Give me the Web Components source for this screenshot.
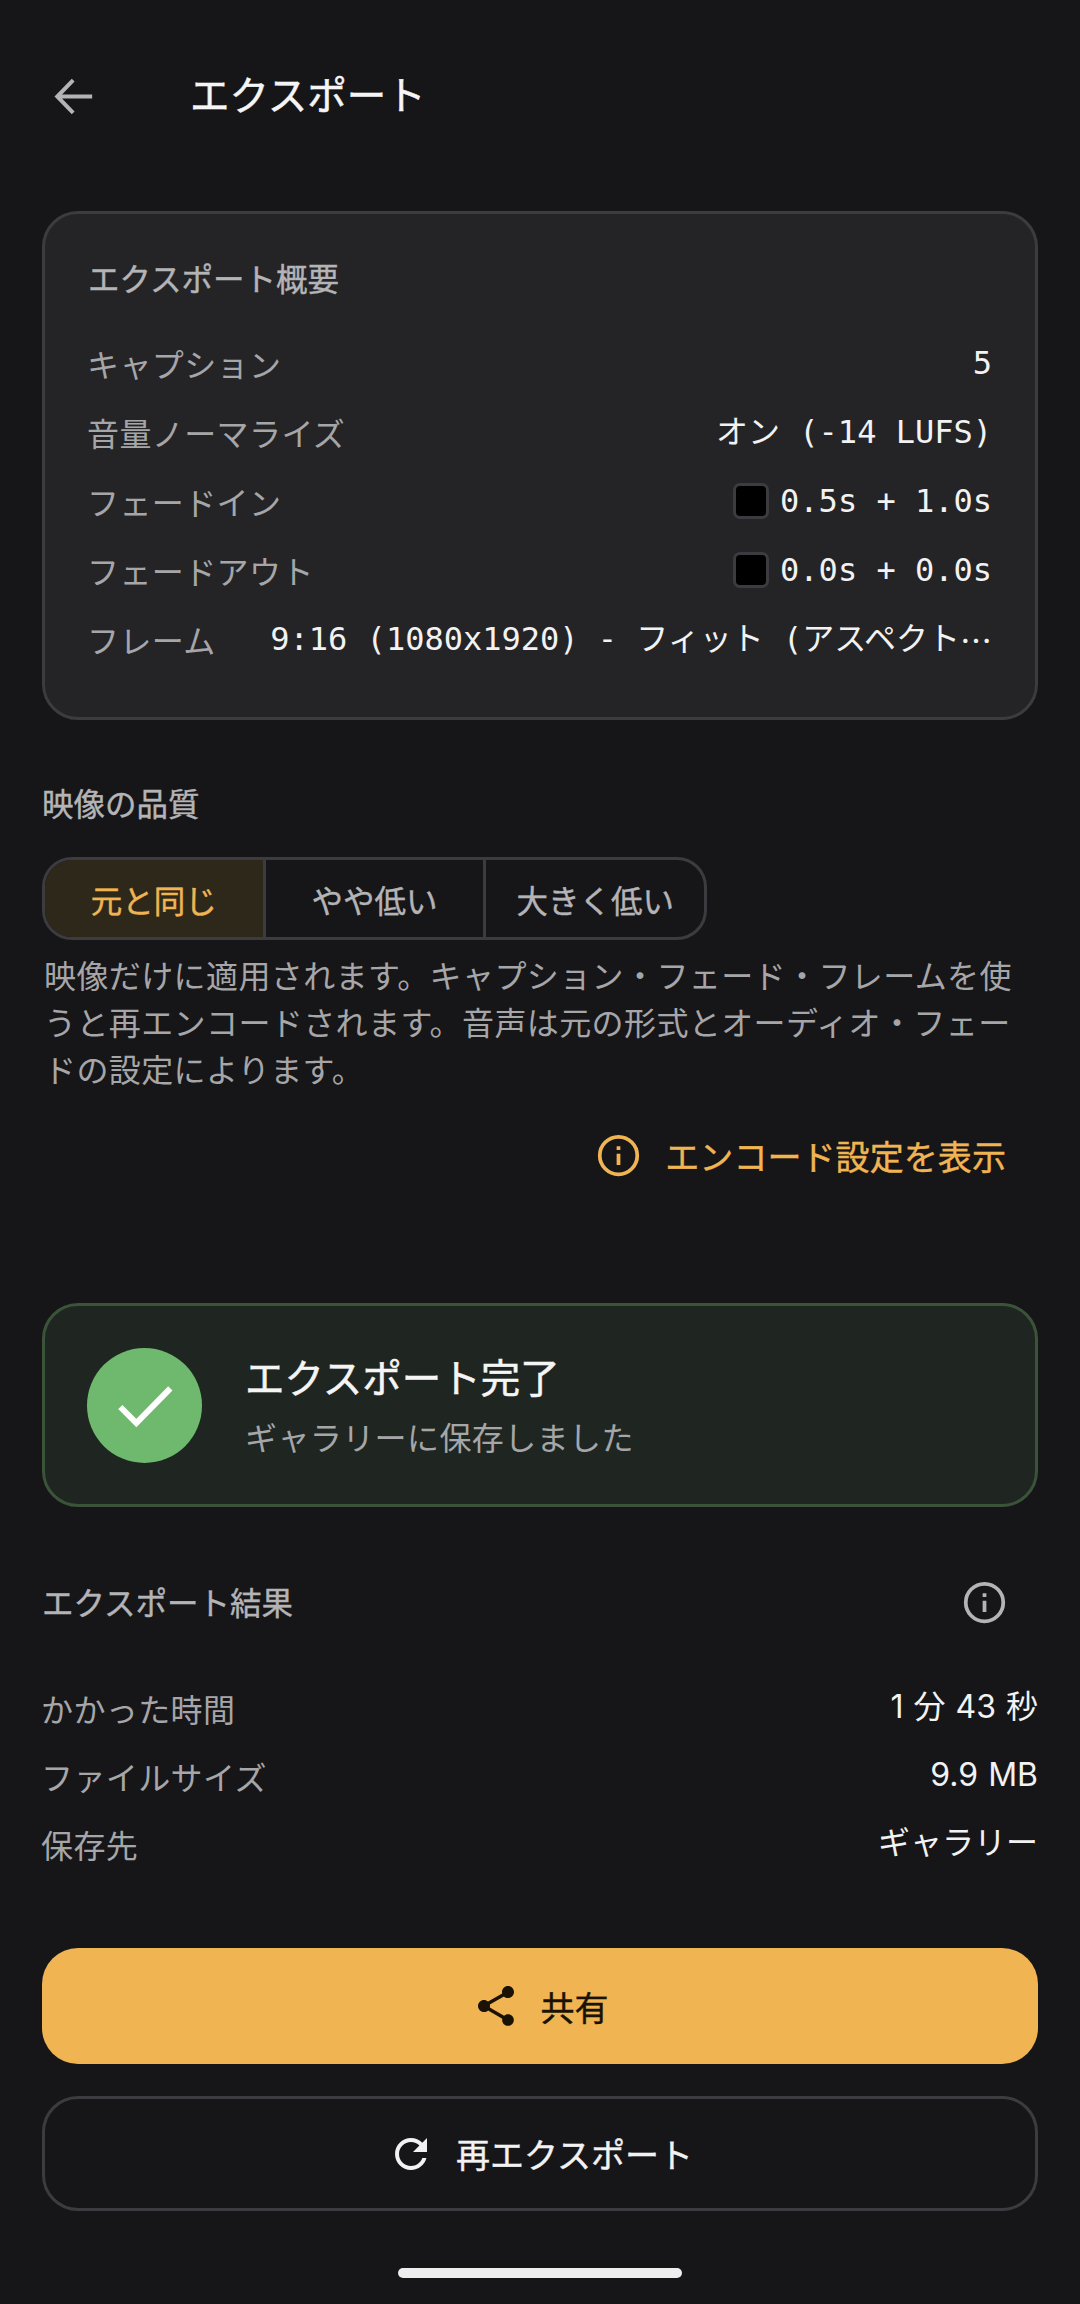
<!DOCTYPE html>
<html lang="ja">
<head>
<meta charset="utf-8">
<title>エクスポート</title>
<style>
  html, body { margin: 0; padding: 0; background: #161618; }
  body {
    font-family: "Noto Sans CJK JP", "Noto Sans", sans-serif;
    color: #f2f2f3;
    width: 1080px;
    height: 2304px;
    overflow: hidden;
  }
  .cjk { font-family: "Noto Sans CJK JP", sans-serif; }
</style>
</head>
<body>
<export-screen>
  <app-bar>エクスポート</app-bar>

  <summary-card>
    <section-title slot="title">エクスポート概要</section-title>
    <info-row label="キャプション" mono>5</info-row>
    <info-row label="音量ノーマライズ" mono>オン (-14 LUFS)</info-row>
    <info-row label="フェードイン" mono><color-swatch></color-swatch>0.5s + 1.0s</info-row>
    <info-row label="フェードアウト" mono><color-swatch></color-swatch>0.0s + 0.0s</info-row>
    <info-row label="フレーム" mono>9:16 (1080x1920) - フィット (アスペクト<span class="cjk">…</span></info-row>
  </summary-card>

  <quality-picker>
    <section-title slot="title">映像の品質</section-title>
    <quality-option selected>元と同じ</quality-option>
    <quality-option>やや低い</quality-option>
    <quality-option>大きく低い</quality-option>
    <span slot="hint">映像だけに適用されます。キャプション・フェード・フレームを使うと再エンコードされます。音声は元の形式とオーディオ・フェードの設定によります。</span>
    <span slot="link">エンコード設定を表示</span>
  </quality-picker>

  <success-banner heading="エクスポート完了" detail="ギャラリーに保存しました"></success-banner>

  <result-block>
    <section-title slot="title">エクスポート結果</section-title>
    <info-row label="かかった時間" plain>1 分 43 秒</info-row>
    <info-row label="ファイルサイズ" plain>9.9 MB</info-row>
    <info-row label="保存先" plain>ギャラリー</info-row>
  </result-block>

  <action-button primary icon="share">共有</action-button>
  <action-button icon="refresh">再エクスポート</action-button>

  <home-bar></home-bar>
</export-screen>

<script>
// Shared icons, all on Material's 24 unit grid
const icons = {
  back: '<path d="M20 12H4.6M11.4 4.6 4.2 12l7.2 7.4" fill="none" stroke="currentColor" stroke-width="1.8"/>',
  info: '<circle cx="12" cy="12" r="10" fill="none" stroke="currentColor" stroke-width="2"/><path d="M11 11h2v6h-2zM11 7h2v2h-2z" fill="currentColor"/>',
  check: '<path d="M4.6 12.6 9.4 17.4 19.6 7" fill="none" stroke="currentColor" stroke-width="1.8"/>',
  share: '<path fill="currentColor" d="M18 16.08c-.76 0-1.44.3-1.96.77L8.91 12.7c.05-.23.09-.46.09-.7s-.04-.47-.09-.7l7.05-4.11c.54.5 1.25.81 2.04.81 1.66 0 3-1.34 3-3s-1.34-3-3-3-3 1.34-3 3c0 .24.04.47.09.7L8.04 9.81C7.5 9.31 6.79 9 6 9c-1.66 0-3 1.34-3 3s1.34 3 3 3c.79 0 1.5-.31 2.04-.81l7.12 4.16c-.05.21-.08.43-.08.65 0 1.61 1.31 2.92 2.92 2.92s2.92-1.31 2.92-2.92-1.31-2.92-2.92-2.92z"/>',
  refresh: '<path fill="currentColor" d="M17.65 6.35C16.2 4.9 14.21 4 12 4c-4.42 0-7.99 3.58-7.99 8s3.57 8 7.99 8c3.73 0 6.84-2.55 7.73-6h-2.08c-.82 2.33-3.04 4-5.65 4-3.31 0-6-2.69-6-6s2.69-6 6-6c1.66 0 3.14.69 4.22 1.78L13 11h7V4l-2.35 2.35z"/>'
};

function icon(name, size) {
  return `<svg width="${size}" height="${size}" viewBox="0 0 24 24" aria-hidden="true">${icons[name]}</svg>`;
}

// Small base class: stamps the markup into an open shadow root
class ShadowElement extends HTMLElement {
  connectedCallback() {
    if (!this.shadowRoot) {
      this.attachShadow({ mode: 'open' });
      this.shadowRoot.innerHTML = this.render();
    }
  }
}

class ExportScreen extends ShadowElement {
  render() {
    return `<style>
      :host { display: flex; flex-direction: column; width: 1080px; height: 2304px; padding: 0 42px; box-sizing: border-box; }
    </style><slot></slot>`;
  }
}

class AppBar extends ShadowElement {
  render() {
    return `<style>
      :host { display: flex; align-items: center; height: 96px; margin: 48px 0 67px; }
      .back { display: flex; width: 148px; padding-left: 6px; box-sizing: border-box; color: #b4b4b7; }
      .title { font-size: 39.5px; font-weight: 400; -webkit-text-stroke: 0.5px currentColor; color: #f5f5f6; line-height: 1; transform: translateY(-3px); }
    </style>
    <span class="back">${icon('back', 53)}</span>
    <span class="title"><slot></slot></span>`;
  }
}

class SectionTitle extends ShadowElement {
  render() {
    return `<style>
      :host { display: block; font-size: 31.5px; font-weight: 400; -webkit-text-stroke: 0.4px currentColor; color: #b4b4b7; line-height: 48px; transform: translateY(-1px); }
    </style><slot></slot>`;
  }
}

class SummaryCard extends ShadowElement {
  render() {
    return `<style>
      :host { display: block; background: #242426; border: 3px solid #3c3c40; border-radius: 36px; padding: 40px 43px 44px; }
      .title { margin-bottom: 26px; }
    </style>
    <div class="title"><slot name="title"></slot></div>
    <slot></slot>`;
  }
}

class InfoRow extends ShadowElement {
  render() {
    const plain = this.hasAttribute('plain');
    const mono = this.hasAttribute('mono');
    const family = mono
      ? '"DejaVu Sans Mono", "Noto Sans CJK JP", monospace'
      : 'Inter, "Noto Sans CJK JP", sans-serif';
    return `<style>
      :host { display: flex; justify-content: space-between; align-items: center; gap: 30px; height: ${plain ? 68 : 69}px; font-size: 32px; }
      .label { flex: none; color: #a6a6a9; line-height: 1; letter-spacing: 0.4px; margin-left: -1px; }
      .value {
        display: flex; align-items: center; justify-content: flex-end; min-width: 0;
        font-family: ${family}; color: #f2f2f3; line-height: 1; white-space: pre; word-spacing: ${plain ? 1 : 0}px;
        transform: translateY(${mono ? 0 : -1}px);
      }
    </style>
    <span class="label">${this.getAttribute('label')}</span>
    <span class="value"><slot></slot></span>`;
  }
}

class ColorSwatch extends ShadowElement {
  render() {
    return `<style>
      :host { display: block; flex: none; width: 36px; height: 36px; box-sizing: border-box; margin-right: 11px; background: #000; border: 3px solid #3c3c40; border-radius: 7px; }
    </style>`;
  }
}

class QualityPicker extends ShadowElement {
  render() {
    return `<style>
      :host { display: block; margin-top: 59px; }
      .group { display: flex; width: 665px; height: 83px; margin-top: 30px; box-sizing: border-box; border: 3px solid #3c3c40; border-radius: 30px; overflow: hidden; }
      .hint { margin: 11px 0 0 2px; width: 990px; font-size: 32px; line-height: 47px; letter-spacing: 0.4px; color: #a6a6a9; }
      .link { display: flex; justify-content: flex-end; align-items: center; gap: 24px; height: 60px; margin: 33px 32px 0 0; color: #f0b552; font-size: 34.1px; font-weight: 400; -webkit-text-stroke: 0.4px currentColor; }
      .link svg { display: block; }
    </style>
    <slot name="title"></slot>
    <div class="group"><slot></slot></div>
    <div class="hint"><slot name="hint"></slot></div>
    <div class="link">${icon('info', 45)}<span><slot name="link"></slot></span></div>`;
  }
}

class QualityOption extends ShadowElement {
  render() {
    const on = this.hasAttribute('selected');
    return `<style>
      :host { display: flex; flex: 1 1 0; align-items: center; justify-content: center; font-size: 31.5px; font-weight: 400; -webkit-text-stroke: 0.4px currentColor; color: ${on ? '#f0b552' : '#b4b4b7'}; background: ${on ? '#2e281b' : 'transparent'}; border-right: 3px solid #3c3c40; }
      :host(:last-of-type) { border-right: none; }
    </style><slot></slot>`;
  }
}

class SuccessBanner extends ShadowElement {
  render() {
    return `<style>
      :host { display: flex; align-items: center; gap: 43px; height: 204px; box-sizing: border-box; margin-top: 118px; padding-left: 42px; background: #1f2621; border: 3px solid #3a5339; border-radius: 36px; }
      .dot { flex: none; display: flex; align-items: center; justify-content: center; width: 115px; height: 115px; border-radius: 50%; background: #6fb96f; color: #fff; }
      .text { display: flex; flex-direction: column; margin-bottom: 3px; }
      .heading { font-size: 39.5px; font-weight: 400; -webkit-text-stroke: 0.5px currentColor; line-height: 56px; color: #f5f5f6; }
      .detail { font-size: 32px; letter-spacing: 0.4px; line-height: 48px; margin-top: 8px; color: #a6a6a9; }
      svg { display: block; }
    </style>
    <span class="dot">${icon('check', 80)}</span>
    <div class="text">
      <span class="heading">${this.getAttribute('heading')}</span>
      <span class="detail">${this.getAttribute('detail')}</span>
    </div>`;
  }
}

class ResultBlock extends ShadowElement {
  render() {
    return `<style>
      :host { display: block; margin-top: 55px; }
      .head { display: flex; justify-content: space-between; align-items: center; height: 80px; margin-bottom: 32px; color: #b4b4b7; }
      .head span { display: flex; margin-right: 31px; }
    </style>
    <div class="head"><slot name="title"></slot><span>${icon('info', 45)}</span></div>
    <slot></slot>`;
  }
}

class ActionButton extends ShadowElement {
  render() {
    const primary = this.hasAttribute('primary');
    return `<style>
      :host {
        display: flex; align-items: center; justify-content: center; gap: 21px; box-sizing: border-box;
        height: ${primary ? 116 : 115}px; margin-top: ${primary ? 70 : 32}px; border-radius: 36px;
        font-size: 34px; font-weight: 400; -webkit-text-stroke: 0.4px currentColor;
        background: ${primary ? '#f0b552' : 'transparent'};
        color: ${primary ? '#1a1204' : '#f2f2f3'};
        border: ${primary ? 'none' : '3px solid #3c3c40'};
      }
      svg { display: block; }
    </style>${icon(this.getAttribute('icon'), 48)}<span><slot></slot></span>`;
  }
}

class HomeBar extends ShadowElement {
  render() {
    return `<style>
      :host { display: block; align-self: center; width: 284px; height: 10px; margin-top: 57px; border-radius: 5px; background: #eeeeee; }
    </style>`;
  }
}

customElements.define('export-screen', ExportScreen);
customElements.define('app-bar', AppBar);
customElements.define('section-title', SectionTitle);
customElements.define('summary-card', SummaryCard);
customElements.define('info-row', InfoRow);
customElements.define('color-swatch', ColorSwatch);
customElements.define('quality-picker', QualityPicker);
customElements.define('quality-option', QualityOption);
customElements.define('success-banner', SuccessBanner);
customElements.define('result-block', ResultBlock);
customElements.define('action-button', ActionButton);
customElements.define('home-bar', HomeBar);
</script>
</body>
</html>
